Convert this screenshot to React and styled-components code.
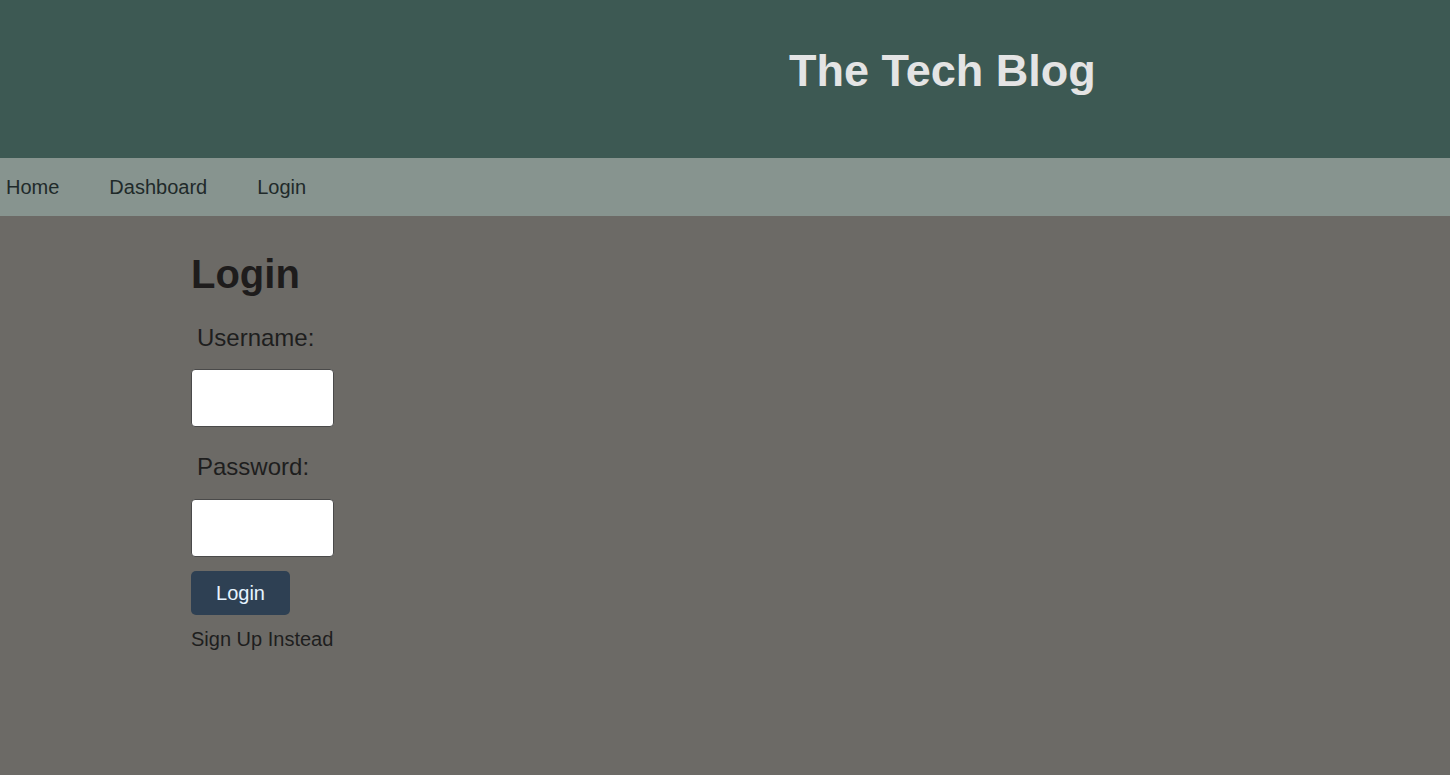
import React from "react";
import styled, { createGlobalStyle } from "styled-components";

const GlobalStyle = createGlobalStyle`
  html, body {
    margin: 0;
    padding: 0;
    background-color: #6c6a66;
    font-family: "Liberation Sans", Arial, sans-serif;
  }
`;

export default function App() {
  return (
    <Page>
      <GlobalStyle />
      <Header>
        <Title>The Tech Blog</Title>
      </Header>
      <Nav>
        <NavLink href="#">Home</NavLink>
        <NavLink href="#">Dashboard</NavLink>
        <NavLink href="#">Login</NavLink>
      </Nav>
      <Main>
        <Heading>Login</Heading>
        <Form onSubmit={(e) => e.preventDefault()}>
          <Label htmlFor="username" top="27px">Username:</Label>
          <Input id="username" type="text" top="17px" />
          <Label htmlFor="password" top="26px">Password:</Label>
          <Input id="password" type="password" top="18px" />
          <Button type="submit">Login</Button>
          <SignUp href="#">Sign Up Instead</SignUp>
        </Form>
      </Main>
    </Page>
  );
}

const Page = styled.div`
  min-height: 775px;
  display: flex;
  flex-direction: column;
  background-color: #6c6a66;
`;
const Header = styled.header`
  height: 158px;
  background-color: #3d5953;
  display: flex;
  align-items: flex-start;
  padding-left: 789px;
  box-sizing: border-box;
`;
const Title = styled.h1`
  margin: 0;
  padding-top: 45px;
  font-size: 45px;
  line-height: 52px;
  font-weight: 700;
  color: #e4e4e4;
`;
const Nav = styled.nav`
  height: 58px;
  background-color: #87948f;
  display: flex;
  align-items: center;
  gap: 50px;
  padding-left: 6px;
`;
const NavLink = styled.a`
  font-size: 20px;
  color: #1f2a2a;
  text-decoration: none;
`;
const Main = styled.main`
  flex: 1;
  padding: 35px 0 0 191px;
`;
const Heading = styled.h2`
  margin: 0;
  font-size: 40px;
  line-height: 46px;
  font-weight: 700;
  color: #1e1c1c;
`;
const Form = styled.form`
  display: flex;
  flex-direction: column;
  align-items: flex-start;
`;
const Label = styled.label`
  margin-top: ${(p) => p.top};
  padding-left: 6px;
  font-size: 24px;
  line-height: 28px;
  color: #1e1e1e;
`;
const Input = styled.input`
  margin-top: ${(p) => p.top};
  width: 143px;
  height: 58px;
  box-sizing: border-box;
  background: #ffffff;
  border: 1px solid #4a4a4a;
  border-radius: 4px;
  outline: none;
`;
const Button = styled.button`
  margin-top: 14px;
  width: 99px;
  height: 44px;
  border: none;
  border-radius: 5px;
  background-color: #2e4053;
  color: #e6f4ff;
  font-family: "Liberation Sans", Arial, sans-serif;
  font-size: 20px;
  cursor: pointer;
`;
const SignUp = styled.a`
  margin-top: 13px;
  font-size: 20px;
  line-height: 23px;
  color: #1e1e1e;
  text-decoration: none;
`;
